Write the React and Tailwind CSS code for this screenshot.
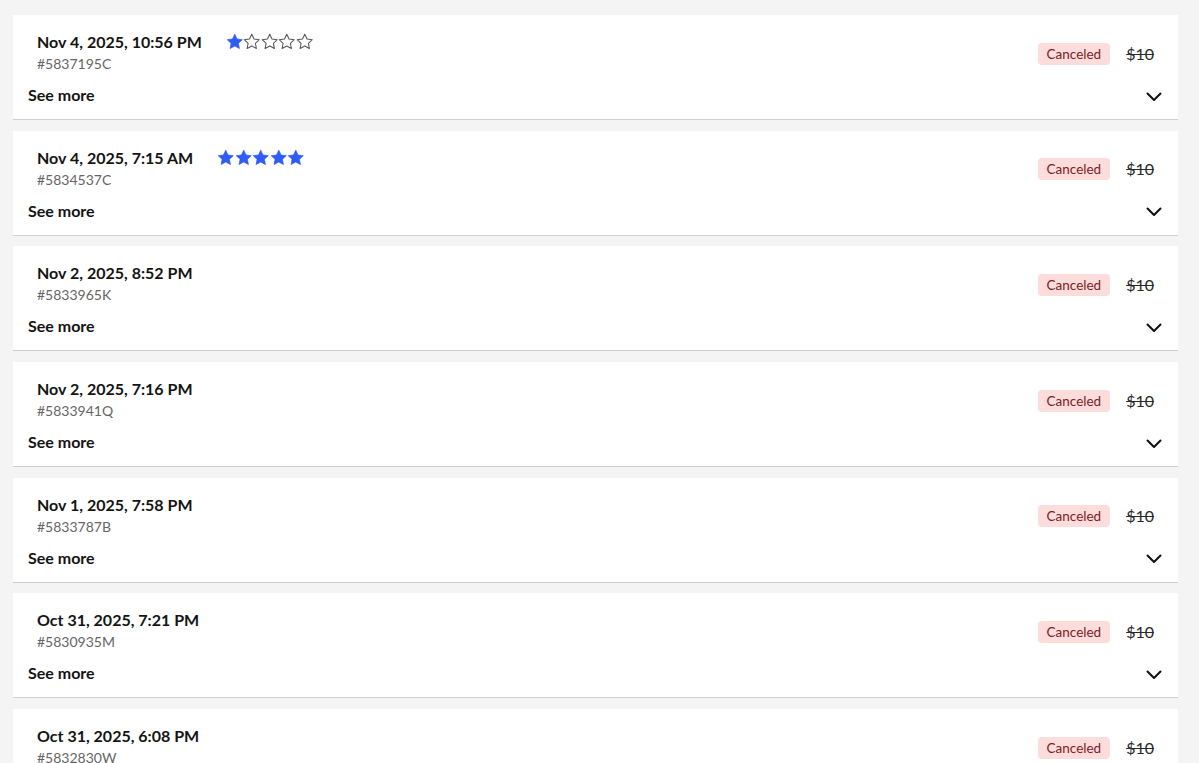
import React from "react";

const orders = [
    { date: "Nov 4, 2025, 10:56 PM", id: "#5837195C", rating: 1 },
    { date: "Nov 4, 2025, 7:15 AM", id: "#5834537C", rating: 5 },
    { date: "Nov 2, 2025, 8:52 PM", id: "#5833965K", rating: 0 },
    { date: "Nov 2, 2025, 7:16 PM", id: "#5833941Q", rating: 0 },
    { date: "Nov 1, 2025, 7:58 PM", id: "#5833787B", rating: 0 },
    { date: "Oct 31, 2025, 7:21 PM", id: "#5830935M", rating: 0 },
    { date: "Oct 31, 2025, 6:08 PM", id: "#5832830W", rating: 0 },
];

const Star = ({ filled }) => (
    <svg width="17.5" height="17" viewBox="0 0 24 23" className="block">
        <path
            d="M12 1.5l3.1 6.6 7.2.9-5.3 5 1.4 7.1L12 17.6l-6.4 3.5L7 14l-5.3-5 7.2-.9z"
            fill={filled ? "#2f5bf6" : "#fff"}
            stroke={filled ? "#2f5bf6" : "#555"}
            strokeWidth={filled ? 1 : 1.4}
            strokeLinejoin="round"
        />
    </svg>
);

const Chevron = () => (
    <svg width="16" height="10" viewBox="0 0 16 10" fill="none" className="mt-[3px]">
        <path d="M1.5 1.5 8 8l6.5-6.5" stroke="#111" strokeWidth="2" strokeLinecap="round" strokeLinejoin="round" />
    </svg>
);

const OrderCard = ({ order }) => (
    <div className="bg-white border-b border-[#cfcfcf] h-[105px] shrink-0 overflow-hidden">
        {/* top row */}
        <div className="flex items-center justify-between pl-6 pr-[24px] pt-[17px]">
            <div className="flex items-start">
                <div>
                    <div className="text-[16px] leading-[20px] font-bold text-[#141414]">{order.date}</div>
                    <div className="mt-[3px] text-[14px] leading-[18px] text-[#666]">{order.id}</div>
                </div>
                {order.rating > 0 && (
                    <div className="flex mt-[1px] ml-[24px]">
                        {[1, 2, 3, 4, 5].map((n) => (
                            <Star key={n} filled={n <= order.rating} />
                        ))}
                    </div>
                )}
            </div>
            <div className="flex items-center mt-[2px]">
                <span className="bg-[#fddcdc] text-[#7b2323] text-[13.5px] leading-[22px] px-[9px] rounded-[4px]">Canceled</span>
                <span className="ml-4 text-[16px] text-[#2a2a2a] line-through">$10</span>
            </div>
        </div>
        {/* see more row */}
        <div className="flex items-center justify-between pl-[15px] pr-[16px] mt-[12px] h-[20px]">
            <span className="text-[16px] font-bold text-[#141414]">See more</span>
            <Chevron />
        </div>
    </div>
);

export default function App() {
    return (
        <div
            className="bg-[#f4f4f4] pl-[13px] pt-[15px] pr-[21px] h-[763px] overflow-hidden"
            style={{ fontFamily: "Lato, 'Liberation Sans', sans-serif" }}
        >
            <div className="flex flex-col gap-[10.7px]">
                {orders.map((o) => (
                    <OrderCard key={o.id} order={o} />
                ))}
            </div>
        </div>
    );
}
